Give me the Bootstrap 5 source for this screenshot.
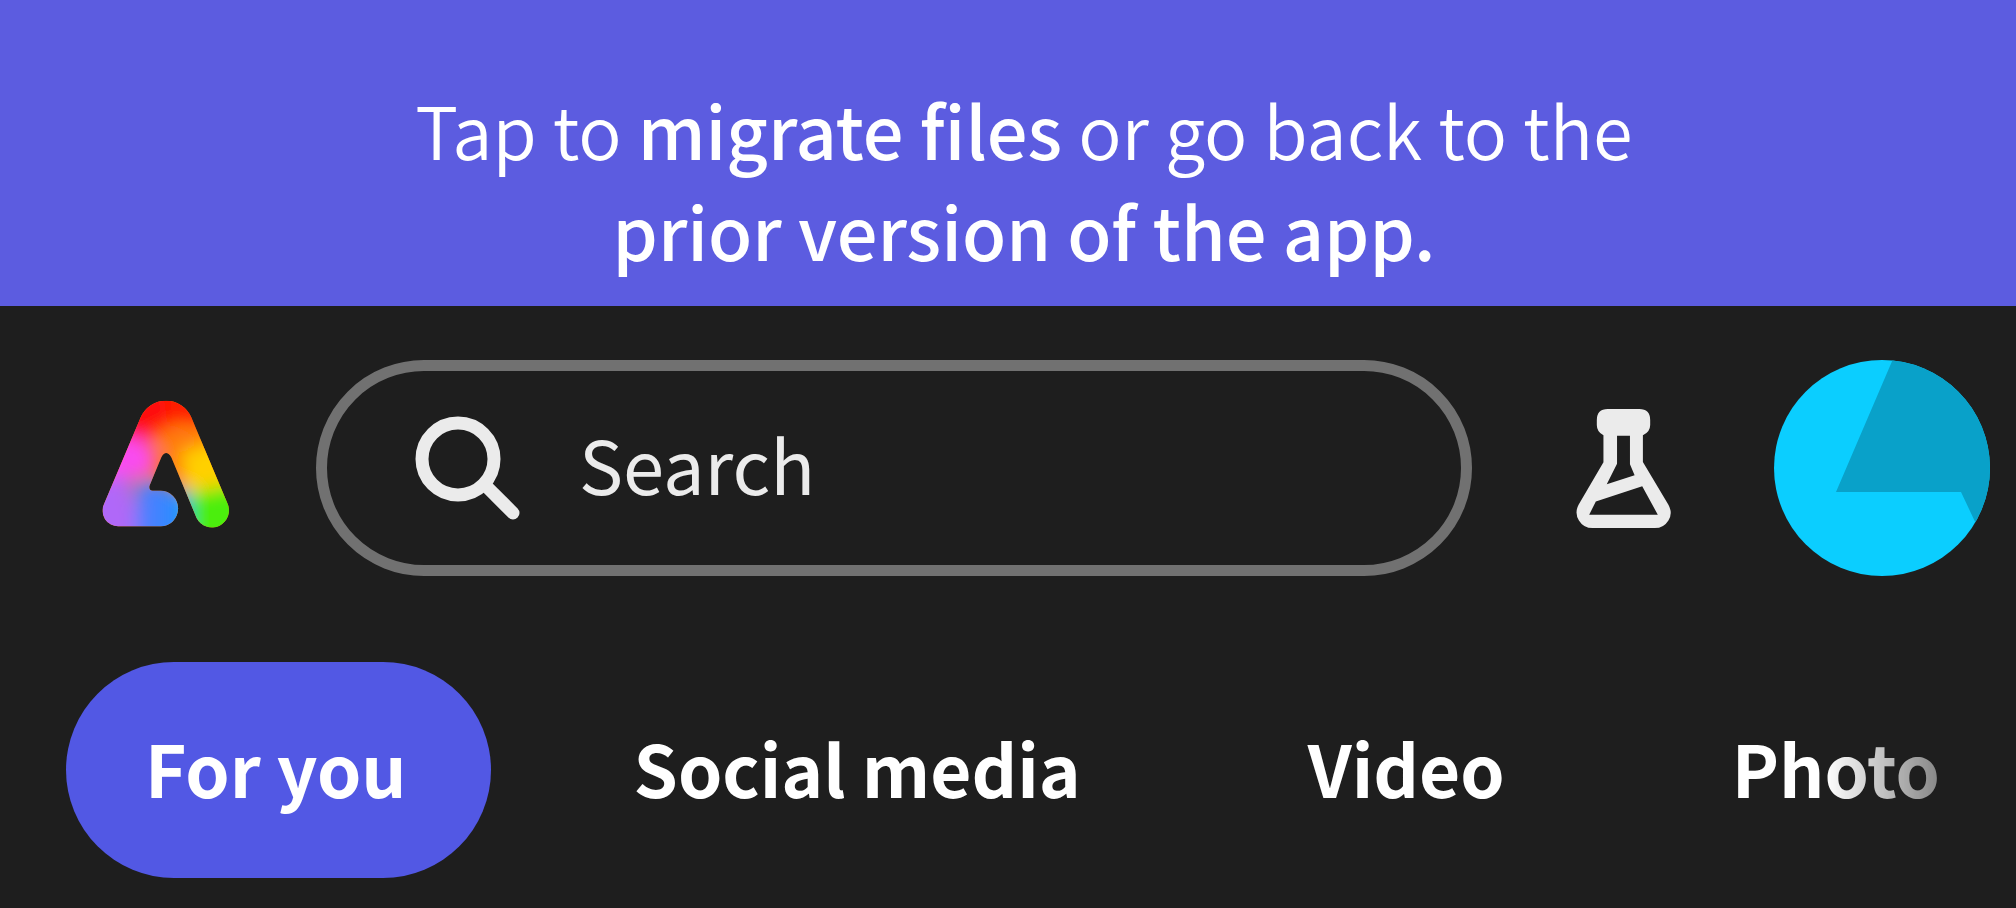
<!DOCTYPE html>
<html lang="en">
<head>
<meta charset="utf-8">
<meta name="viewport" content="width=device-width, initial-scale=1">
<title>Home</title>
<link href="https://cdn.jsdelivr.net/npm/bootstrap@5.3.0/dist/css/bootstrap.min.css" rel="stylesheet">
<style>
  body { background: #1e1e1e; color: #fff; font-family: "Noto Sans CJK JP", "Open Sans", sans-serif; }
  .notice { background: #5c5ce0; padding: 78px 0 26px 32px; font-size: 72px; line-height: 101px; font-weight: 350; }
  .notice a { color: #fff; font-weight: 500; }
  .top-bar { padding: 54px 26px 0 102px; }
  .brand { margin-right: 86px; padding-bottom: 10px; }
  .search-box { height: 216px; border: 11px solid #717171; border-radius: 108px; padding: 0 84px; gap: 56px; }
  .search-box input { font-size: 74px; line-height: 100px; color: #ebebeb; }
  .search-box input.pb-fit { padding: 0 0 10px; }
  .search-box input::placeholder { color: #ebebeb; opacity: 1; }
  .search-box input:focus { outline: 0; }
  .labs { margin: 0 103px 0 104px; }
  .chips { padding: 86px 0 28px 66px; gap: 64px; -webkit-mask-image: linear-gradient(to left, rgba(0,0,0,.1), #000 190px); mask-image: linear-gradient(to left, rgba(0,0,0,.1), #000 190px); }
  .chip { height: 216px; padding: 0 84px 6px 79px; border: 0; border-radius: 108px; background: none; color: #fff; font-size: 71px; line-height: 100px; font-weight: 700; }
  .chip.active { background: #5258e4; }
</style>
</head>
<body>
<p class="notice text-center mb-0">Tap to <a href="#migrate" class="text-decoration-none">migrate files</a> or go back to the<br><a href="#prior" class="text-decoration-none">prior version of the app.</a></p>

<header class="top-bar d-flex align-items-center">
  <a href="#home" class="brand d-flex flex-shrink-0" aria-label="Home">
    <svg width="128" height="129" viewBox="64 60 384 388" aria-hidden="true">
      <defs>
        <clipPath id="mark-shape"><path d="M180 115A83 83 0 0 1 332 115L440 372A50 50 0 0 1 348 418L272 235Q256 210 242 235L206 322Q204 336 216 336H240A52 53 0 0 1 240 443H114A47 47 0 0 1 70 375Z"/></clipPath>
        <filter id="soft" x="-50%" y="-50%" width="200%" height="200%"><feGaussianBlur stdDeviation="26"/></filter>
      </defs>
      <g clip-path="url(#mark-shape)">
        <rect x="40" y="40" width="430" height="430" fill="#ff7a10"/>
        <g filter="url(#soft)">
          <path d="M-20 -20H256L270 150L190 200L-20 190Z" fill="#ff0a0a"/>
          <path d="M240 -20H540V110L330 130L260 130Z" fill="#ff1c00"/>
          <path d="M210 170L280 140L380 190L300 250Z" fill="#ff7a10"/>
          <path d="M300 220L440 170L480 320L310 350Z" fill="#ffd000"/>
          <path d="M320 345L500 310V500H320Z" fill="#4cee10"/>
          <path d="M-20 170L180 175L230 230L215 290L-20 320Z" fill="#f94cf0"/>
          <path d="M-20 310L150 290L180 500H-20Z" fill="#b068f8"/>
          <path d="M165 310L220 300L324 345V500H165Z" fill="#4a80ff"/>
          <path d="M245 340H324V500H245Z" fill="#2a8cff"/>
        </g>
      </g>
    </svg>
  </a>

  <form class="search-box d-flex align-items-center flex-grow-1" role="search">
    <label for="search" class="flex-shrink-0 d-flex" aria-label="Search">
      <svg width="112" height="108" viewBox="0 0 112 108" fill="none" stroke="#ebebeb" aria-hidden="true">
        <circle cx="47" cy="45" r="36" stroke-width="13"/>
        <path d="M74 71L102 99" stroke-width="13" stroke-linecap="round"/>
      </svg>
    </label>
    <input id="search" type="text" placeholder="Search" class="pb-fit bg-transparent border-0 w-100">
  </form>

  <button type="button" class="labs btn p-0 border-0 d-flex flex-shrink-0" aria-label="Labs">
    <svg width="95" height="119" viewBox="48 57 285 359" aria-hidden="true">
      <path fill="#ebebeb" fill-rule="evenodd" d="M143 57H238Q271 57 271 90V105Q271 126 249 136V217L326 346Q340 372 326 393Q312 416 285 416H97Q70 416 56 393Q42 370 55 346L130 218V136Q110 126 110 105V90Q110 57 143 57ZM171 138V222L140 284L224 257L210 224V138ZM247 290L107 336L87 376H294Z"/>
    </svg>
  </button>

  <a href="#profile" class="d-flex flex-shrink-0" aria-label="Profile">
    <svg width="216" height="216" viewBox="0 0 216 216" aria-hidden="true">
      <clipPath id="round"><circle cx="108" cy="108" r="108"/></clipPath>
      <g clip-path="url(#round)">
        <rect width="216" height="216" fill="#0bceff"/>
        <path d="M122 -8L62 132H187L204 168L230 190V-8Z" fill="#09a1c9"/>
      </g>
    </svg>
  </a>
</header>

<nav class="chips d-flex overflow-hidden" aria-label="Categories">
  <button type="button" class="chip active flex-shrink-0">For you</button>
  <button type="button" class="chip flex-shrink-0">Social media</button>
  <button type="button" class="chip flex-shrink-0">Video</button>
  <button type="button" class="chip flex-shrink-0">Photo</button>
</nav>
<script src="https://cdn.jsdelivr.net/npm/bootstrap@5.3.0/dist/js/bootstrap.bundle.min.js"></script>
</body>
</html>
